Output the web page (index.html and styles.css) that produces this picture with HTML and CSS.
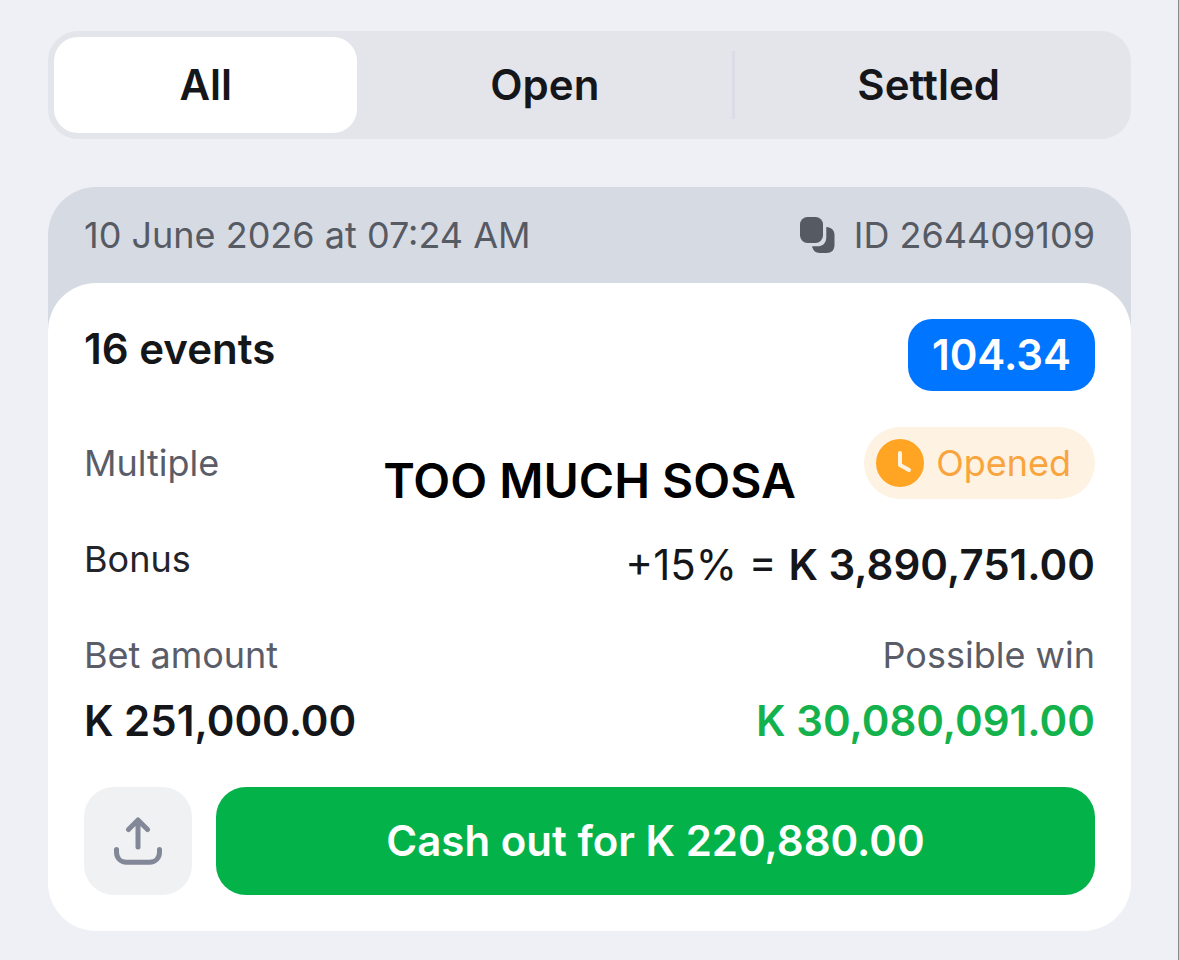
FILE: index.html
```html
<!DOCTYPE html>
<html lang="en">
<head>
  <meta charset="utf-8">
  <title>Bet history</title>
  <link rel="stylesheet" href="styles.css">
</head>
<body>

<main class="page">
  <nav class="tabs">
    <button type="button" class="tab active">All</button>
    <button type="button" class="tab">Open</button>
    <button type="button" class="tab divided">Settled</button>
  </nav>

  <section class="bet">
    <header class="bet-header">
      <span>10 June 2026 at 07:24 AM</span>
      <button type="button" class="bet-id">
        <svg class="copy-icon" viewBox="0 0 36 36" aria-hidden="true">
          <rect width="23" height="26" rx="7.5"/>
          <path d="M26.3 10C31.5 10.4 34.5 13 34.5 18V28C34.5 33 31.5 36 26.5 36H20C15.5 36 13 33.5 12 29.3H17C23 29.3 26.3 26 26.3 20Z"/>
        </svg>
        ID 264409109
      </button>
    </header>

    <div class="bet-body">
      <div class="row">
        <h2 class="value">16 events</h2>
        <span class="odds">104.34</span>
      </div>

      <div class="row status-row">
        <span class="label">Multiple</span>
        <strong class="caption">TOO MUCH SOSA</strong>
        <span class="status">
          <svg class="clock-icon" viewBox="0 0 48 48" aria-hidden="true">
            <circle cx="24" cy="24" r="24"/>
            <path d="M24 14V26L33 31"/>
          </svg>
          Opened
        </span>
      </div>

      <div class="row">
        <span class="label dark">Bonus</span>
        <span class="bonus">+15% = <b>K 3,890,751.00</b></span>
      </div>

      <div class="row">
        <div class="amount">
          <span class="label">Bet amount</span>
          <span class="value">K 251,000.00</span>
        </div>
        <div class="amount win">
          <span class="label">Possible win</span>
          <span class="value">K 30,080,091.00</span>
        </div>
      </div>

      <div class="actions">
        <button type="button" class="share" aria-label="Share">
          <svg class="share-icon" viewBox="0 0 48 48" aria-hidden="true">
            <path d="M24 30V4M14.5 12.5L24 3L33.5 12.5M2.5 32.5V35C2.5 41 6.5 45.2 12.5 45.2H35.5C41.5 45.2 45.5 41 45.5 35V32.5"/>
          </svg>
        </button>
        <button type="button" class="cashout">Cash out for K 220,880.00</button>
      </div>
    </div>
  </section>
</main>

</body>
</html>
```

FILE: styles.css
```css
* {
  box-sizing: border-box;
}

body {
  margin: 0;
  min-height: 100vh;
  background: #eff0f5;
  border-right: 1px solid #88898d;
  font-family: Inter, sans-serif;
  font-size: 36px;
  line-height: 48px;
  color: #15161a;
}

button {
  margin: 0;
  padding: 0;
  border: 0;
  background: none;
  font: inherit;
  color: inherit;
  cursor: pointer;
}

.page {
  padding: 31px 47px 29px 48px;
}

/* tabs */

.tabs {
  display: grid;
  grid-template-columns: 17fr 21fr 22fr;
  padding: 6px;
  margin-bottom: 48px;
  border-radius: 30px;
  background: #e4e5eb;
}

.tab {
  height: 96px;
  border-radius: 24px;
  font-size: 42px;
  font-weight: 600;
}

.tab.active {
  background: #fff;
}

.tab.divided {
  border-radius: 0;
  background: linear-gradient(#dbdce6, #dbdce6) left center / 3px 68px no-repeat;
}

/* bet card */

.bet-header {
  display: flex;
  justify-content: space-between;
  padding: 24px 36px 72px;
  border-radius: 48px 48px 0 0;
  background: #d6dae3;
  color: #565a63;
}

.bet-id {
  display: flex;
  align-items: center;
  gap: 18px;
}

.copy-icon {
  width: 36px;
  height: 36px;
  fill: #565a63;
}

.bet-body {
  display: flex;
  flex-direction: column;
  gap: 36px;
  margin-top: -48px;
  padding: 36px;
  border-radius: 48px;
  background: #fff;
}

.row {
  display: flex;
  justify-content: space-between;
  align-items: flex-start;
}

.label {
  color: #5a5d68;
}

.label.dark {
  color: #23242a;
}

.value {
  margin: 0;
  font-size: 42px;
  font-weight: 600;
  line-height: 60px;
}

.odds {
  padding: 0 24px;
  border-radius: 24px;
  background: #0075ff;
  color: #fff;
  font-size: 42px;
  font-weight: 600;
  line-height: 72px;
}

.status-row {
  position: relative;
  align-items: center;
}

/* lies over the rows, centred on the card */
.caption {
  position: absolute;
  top: 24px;
  left: 0;
  right: 0;
  text-align: center;
  font-size: 48px;
  font-weight: 600;
  line-height: 60px;
  color: #000;
}

.status {
  display: flex;
  align-items: center;
  gap: 12px;
  height: 72px;
  padding: 0 24px 0 12px;
  border-radius: 36px;
  background: #fef2e2;
  color: #f9a43c;
}

.clock-icon {
  width: 48px;
  height: 48px;
}

.clock-icon circle {
  fill: #ffa423;
}

.clock-icon path {
  fill: none;
  stroke: #fef2e2;
  stroke-width: 4;
  stroke-linecap: round;
  stroke-linejoin: round;
}

.bonus {
  font-size: 42px;
  line-height: 60px;
}

.bonus b {
  font-weight: 600;
}

.amount {
  display: flex;
  flex-direction: column;
  gap: 12px;
}

.amount.win {
  text-align: right;
}

.win .value {
  color: #14b24c;
}

/* actions */

.actions {
  display: flex;
  gap: 24px;
}

.share {
  display: flex;
  align-items: center;
  justify-content: center;
  width: 108px;
  height: 108px;
  border-radius: 30px;
  background: #f0f1f3;
}

.share-icon {
  width: 48px;
  height: 48px;
  fill: none;
  stroke: #838899;
  stroke-width: 5;
  stroke-linecap: round;
  stroke-linejoin: round;
}

.cashout {
  flex: 1;
  height: 108px;
  border-radius: 30px;
  background: #03b34a;
  color: #fff;
  font-size: 42px;
  font-weight: 600;
}
```
